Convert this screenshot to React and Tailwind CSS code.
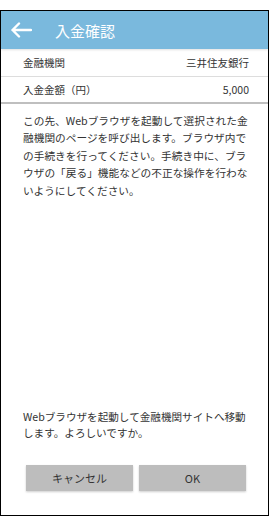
import React from 'react';

const font = { fontFamily: '"Noto Sans CJK JP", "Noto Sans", sans-serif' };

export default function App() {
  return (
    <div className="w-[270px] h-[517px] bg-white" style={font}>
      <div className="mt-[10px] w-[269px] h-[506px] border border-black flex flex-col bg-white">
        {/* header */}
        <div className="h-[38px] bg-[#7ab9dd] flex items-center shrink-0 shadow-[0_1px_2px_rgba(0,0,0,0.12)]">
          <svg width="22" height="16" viewBox="0 0 22 16" className="ml-[9px]">
            <path d="M21 8H2.5M9 1.5L2.5 8L9 14.5" fill="none" stroke="white" strokeWidth="2.4" strokeLinecap="round" strokeLinejoin="round" />
          </svg>
          <span className="ml-[23px] text-[15px] text-white leading-none">入金確認</span>
        </div>

        {/* rows */}
        <div className="h-[27px] mt-[1px] flex items-center justify-between pl-[22px] pr-[19px] text-[10.5px] text-[#333] border-b border-[#dddddd]">
          <span>金融機関</span>
          <span>三井住友銀行</span>
        </div>
        <div className="h-[27px] flex items-center justify-between pl-[22px] pr-[19px] text-[10.5px] text-[#333] border-b-2 border-[#bfbfbf]">
          <span>入金金額（円）</span>
          <span>5,000</span>
        </div>

        <p className="pt-[8px] pl-[22px] w-[250px] text-[10.7px] leading-[17.4px] text-[#333]">
          この先、Webブラウザを起動して選択された金融機関のページを呼び出します。ブラウザ内での手続きを行ってください。手続き中に、ブラウザの「戻る」機能などの不正な操作を行わないようにしてください。
        </p>

        <div className="flex-1" />

        <p className="pl-[22px] w-[250px] text-[10.6px] leading-[16px] text-[#333]">
          Webブラウザを起動して金融機関サイトへ移動します。よろしいですか。
        </p>

        <div className="mt-[24px] mb-[24px] pl-[25px] pr-[22px] flex gap-[6px]">
          <button className="flex-1 h-[26px] bg-[#bdbdbd] text-[11px] text-[#333] shadow-[0_1px_2px_rgba(0,0,0,0.2)]">キャンセル</button>
          <button className="flex-1 h-[26px] bg-[#bdbdbd] text-[11px] text-[#333] shadow-[0_1px_2px_rgba(0,0,0,0.2)]">OK</button>
        </div>
      </div>
    </div>
  );
}
